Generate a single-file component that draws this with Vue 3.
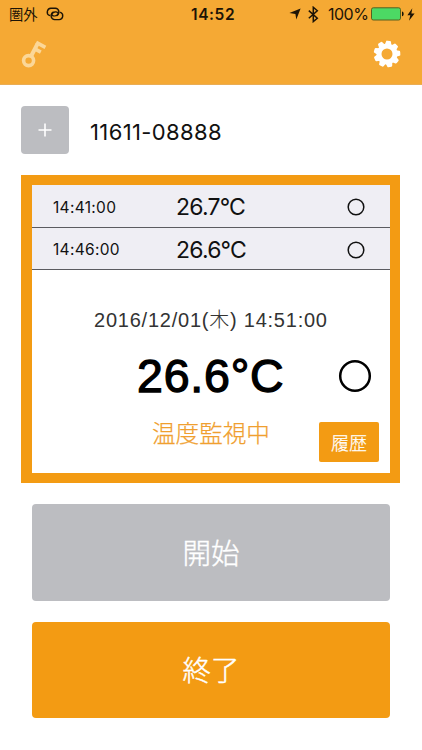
<script setup>
const history = [
  { time: '14:41:00', temp: '26.7°C' },
  { time: '14:46:00', temp: '26.6°C' },
]
</script>

<template>
  <main class="screen">
    <header class="header">
      <div class="status">
        <span class="carrier">圏外</span>
        <svg class="link" width="18" height="14" viewBox="0 0 18 14" fill="none" stroke="currentColor" stroke-width="1.4" stroke-linecap="round">
          <path d="M3.4 8.4A3.8 3.8 0 0 1 4.8 1.2h4.6a3.7 3.7 0 0 1 1.8 6.8C9.8 8.9 7.2 9.3 6.2 8.2c-.9-.9-.3-2.5.9-3" />
          <path d="M14.6 5.4a3.8 3.8 0 0 1-1.4 7.2H8.6a3.7 3.7 0 0 1-1.8-6.8C8.2 4.9 10.8 4.5 11.8 5.6c.9.9.3 2.5-.9 3" />
        </svg>
        <span class="clock">14:52</span>
        <svg class="arrow" width="12" height="12" viewBox="0 0 12 12" fill="currentColor"><path d="M11.6.4 7.3 11.4 6.4 6 .4 5.1Z" /></svg>
        <svg class="bt" width="11" height="17" viewBox="0 0 11 17" fill="none" stroke="currentColor" stroke-width="1.5"><path d="m.8 4.6 8.5 7.6-4 3.4V1.3l4 3.5-8.5 7.5" /></svg>
        <span class="percent">100%</span>
        <svg class="battery" width="34" height="14" viewBox="0 0 34 14">
          <rect x=".5" y=".8" width="29" height="12.2" rx="1.8" fill="#4cd964" stroke="#59601e" />
          <path d="M31 4.5c2.2.3 2.2 4.5 0 4.8Z" fill="#171307" />
        </svg>
        <svg class="bolt" width="8" height="13" viewBox="0 0 8 13" fill="currentColor"><path d="M5.3.3.4 7.2h2.9L2 12.7 7.6 5.4H4.4Z" /></svg>
      </div>
      <nav class="tools">
        <svg class="key" width="26" height="28" viewBox="0 0 26 28" fill="none" stroke="#fbd798">
          <circle cx="7.6" cy="20.6" r="5" stroke-width="3.6" />
          <path d="M10.2 16 16.6 3.6" stroke-width="4" />
          <path d="m15.2 2.4 9.2 5M13.8 8.8l6 3.3" stroke-width="3.6" />
        </svg>
        <svg class="gear" width="28" height="28" viewBox="-14 -14 28 28">
          <circle r="8" fill="none" stroke="#fff" stroke-width="5" />
          <path v-for="n in 9" :key="n" d="M-3.3-9.2-2.5-12.4Q-2.3-13.3-1.4-13.3H1.4Q2.3-13.3 2.5-12.4L3.3-9.2Z" fill="#fff" :transform="`rotate(${n * 40 + 7})`" />
        </svg>
      </nav>
    </header>

    <section class="device">
      <button class="add" aria-label="add"><svg width="14" height="14" viewBox="0 0 14 14" stroke="#fff" stroke-width="1.6"><path d="M7 .5v13M.5 7h13" /></svg></button>
      <span class="device-id">11611-08888</span>
    </section>

    <section class="panel">
      <div v-for="row in history" :key="row.time" class="row">
        <span class="time">{{ row.time }}</span>
        <span class="temp">{{ row.temp }}</span>
        <svg width="18" height="18" viewBox="0 0 18 18" fill="none" stroke="#111" stroke-width="1.5"><circle cx="9" cy="9" r="7.8" /></svg>
      </div>
      <div class="date">2016/12/01(木) 14:51:00</div>
      <div class="current">
        <span class="reading">26.6°C</span>
        <svg width="34" height="34" viewBox="0 0 34 34" fill="none" stroke="#000" stroke-width="2.5"><circle cx="17" cy="17" r="14.8" /></svg>
      </div>
      <div class="foot">
        <span class="state">温度監視中</span>
        <button class="log">履歴</button>
      </div>
    </section>

    <button class="action start">開始</button>
    <button class="action stop">終了</button>
  </main>
</template>

<style>
body { background: #fff; }
</style>

<style scoped>
* { box-sizing: border-box; }
.screen {
  width: 422px;
  height: 750px;
  overflow: hidden;
  background: #fff;
  color: #111;
  font-family: Inter, "Noto Sans CJK JP", sans-serif;
  white-space: nowrap;
}
svg { display: block; flex: none; }
button { border: 0; padding: 0; margin: 0; color: #fff; font-family: "Noto Sans CJK JP", sans-serif; font-weight: 300; }
.header { height: 85px; background: #f5a934; border-bottom: 1px solid #e9ad55; }
.status { height: 28px; display: flex; align-items: center; padding-left: 9px; color: #1d1406; }
.carrier { width: 37px; font: 400 14.3px/28px "Noto Sans CJK JP", sans-serif; }
.clock { width: 98px; margin-left: 127px; font-size: 15.5px; font-weight: 600; letter-spacing: .6px; }
.bt { margin-left: 7px; }
.percent { width: 43px; margin-left: 9px; font-size: 16px; letter-spacing: -.5px; }
.bolt { margin-left: 2px; }
.tools { display: flex; justify-content: space-between; padding: 12px 21px 0; }
.device { height: 90px; display: flex; padding: 21px 0 0 21px; }
.add { width: 48px; height: 48px; border-radius: 4px; background: #bcbdc1; display: grid; place-items: center; }
.device-id { margin-left: 21px; font-size: 22px; line-height: 53px; letter-spacing: .38px; }
.panel { width: 379px; height: 308px; margin-left: 21px; border: 10px solid #f39b13; border-left-width: 11px; }
.row { height: 42.5px; display: flex; align-items: center; padding: 3px 25px 0 21px; background: #efeef4; border-bottom: 1.5px solid #5b5b60; }
.time { width: 123px; font-size: 15.5px; letter-spacing: .3px; }
.temp { flex: 1; font-size: 23px; letter-spacing: -.8px; }
.date { height: 72px; padding: 34px 0 0 62px; font: 400 20px/32px "Liberation Sans", "Noto Sans CJK JP", sans-serif; font-weight: 300; letter-spacing: .77px; color: #333; }
.current { height: 58px; display: flex; align-items: center; justify-content: space-between; padding: 10px 18px 0 105px; color: #000; }
.reading { font: 400 46.5px/50px "Liberation Sans", sans-serif; -webkit-text-stroke: 1.3px #000; letter-spacing: .8px; }
.foot { display: flex; justify-content: space-between; padding: 14px 11px 0 120px; }
.state { color: #f09f2f; font: 300 23.6px/36px "Noto Sans CJK JP", sans-serif; -webkit-text-stroke: .25px #f09f2f; }
.log { width: 60px; height: 40px; margin-top: 8px; border-radius: 2px; background: #f39b13; font-size: 18px; line-height: 38px; -webkit-text-stroke: .25px #fff; }
.action { display: block; width: 358px; margin-left: 32px; border-radius: 4px; padding-bottom: 3px; font-size: 28.5px; -webkit-text-stroke: .4px #fff; }
.start { height: 97px; margin-top: 21px; background: #bcbdc1; }
.stop { height: 96px; margin-top: 21px; background: #f39b13; }
</style>
